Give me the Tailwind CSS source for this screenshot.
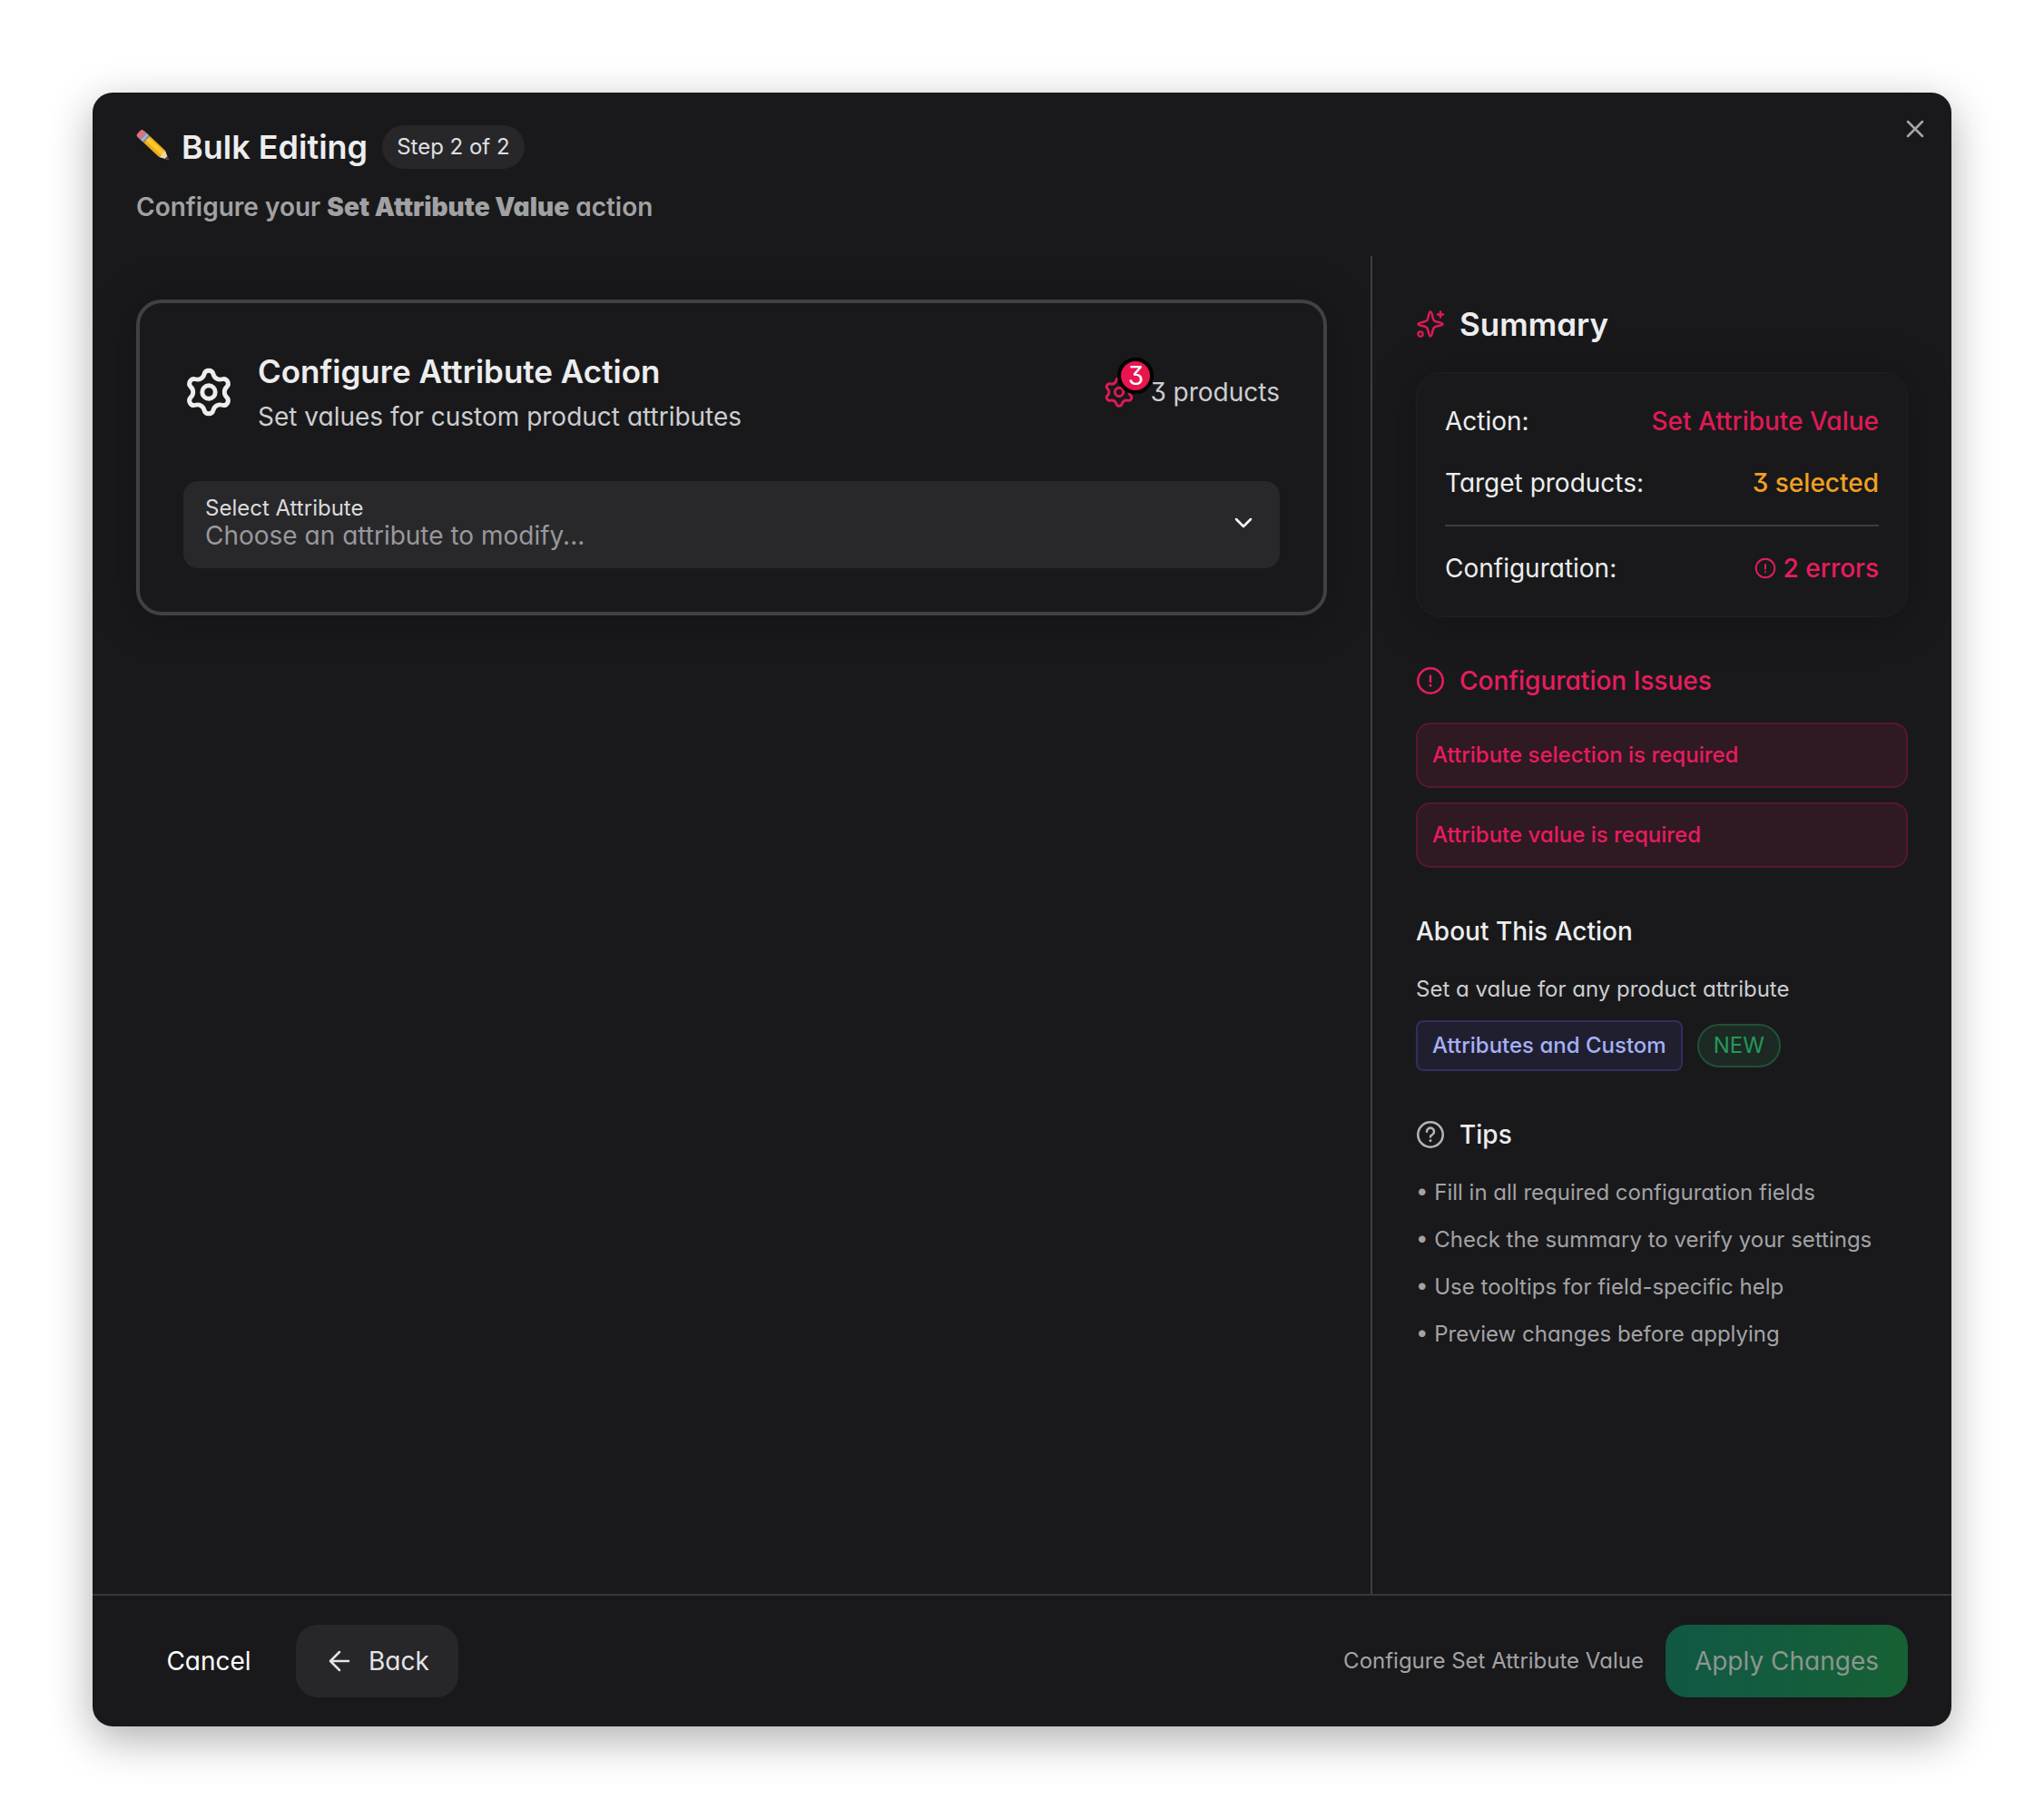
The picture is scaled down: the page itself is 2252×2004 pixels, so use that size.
<!DOCTYPE html>
<html lang="en">
<head>
  <meta charset="UTF-8">
  <meta name="viewport" content="width=device-width, initial-scale=1.0">
  <title>Bulk Editing</title>
  <script src="https://cdn.jsdelivr.net/npm/@tailwindcss/browser@4"></script>
</head>
<body class="bg-white font-['Inter','Liberation_Sans',sans-serif] [font-feature-settings:'cv09','cv11'] [font-optical-sizing:none] antialiased">

  <!-- Shared icons -->
  <svg class="hidden" aria-hidden="true">
    <symbol id="gear" viewBox="0 0 24 24" fill="none" stroke="currentColor" stroke-linecap="round" stroke-linejoin="round">
      <path d="M9.860 3.490A2.200 2.200 0 0 1 14.140 3.490A3.300 3.300 0 0 0 18.300 5.890A2.200 2.200 0 0 1 20.440 9.600A3.300 3.300 0 0 0 20.440 14.400A2.200 2.200 0 0 1 18.300 18.110A3.300 3.300 0 0 0 14.140 20.510A2.200 2.200 0 0 1 9.860 20.510A3.300 3.300 0 0 0 5.700 18.110A2.200 2.200 0 0 1 3.560 14.400A3.300 3.300 0 0 0 3.560 9.600A2.200 2.200 0 0 1 5.700 5.890A3.300 3.300 0 0 0 9.860 3.490z"/>
      <circle cx="12" cy="12" r="3.100"/>
    </symbol>
    <symbol id="alert" viewBox="0 0 24 24" fill="none" stroke="currentColor" stroke-linecap="round" stroke-linejoin="round">
      <circle cx="12" cy="12" r="10.300" stroke-width="1.900"/>
      <path d="M12 8v4.700" stroke-width="1.900"/>
      <path d="M12 16h.01" stroke-width="2.200"/>
    </symbol>
  </svg>

  <div class="flex min-h-screen p-[102px]">
    <div role="dialog" aria-labelledby="dialog-title" class="relative flex flex-1 flex-col overflow-clip rounded-[22px] bg-[#19191b] text-[28px] leading-[44px] text-[#ededee] shadow-[0_14px_48px_rgba(0,0,0,0.32)]">

      <button type="button" aria-label="Close" class="absolute top-5 right-5 flex size-10 items-center justify-center text-[#a6a6aa]">
        <svg class="size-6" viewBox="0 0 24 24" fill="none" stroke="currentColor" stroke-width="2.500" stroke-linecap="round"><path d="M4 4l16 16M20 4L4 20"/></svg>
      </button>

      <!-- Header -->
      <header class="flex flex-col gap-5 px-12 pt-9 pb-7">
        <div class="flex items-center">
          <svg class="mr-3.5 size-9 overflow-visible" viewBox="0 0 36 36" aria-hidden="true">
            <g transform="translate(3 1.500) rotate(43)">
              <path d="M3-5h4V5H3a3 3 0 0 1-3-3v-4a3 3 0 0 1 3-3z" fill="#e0707c"/>
              <path d="M6-5h6V5H6z" fill="#8593b0"/>
              <path d="M8-5h1.500V5H8z" fill="#b4bfd2"/>
              <path d="M12-5h23v10H12z" fill="#f0a91c"/>
              <path d="M12-3h24v4.500H12z" fill="#fccb2e"/>
              <path d="M35-5l10 5-10 5z" fill="#ecd7a5"/>
              <path d="M41-2l4.500 2L41 2z" fill="#44403f"/>
            </g>
          </svg>
          <h1 id="dialog-title" class="text-[36px] font-semibold">Bulk Editing</h1>
          <span class="ml-4 flex h-12 items-center rounded-full bg-[#27272a] px-4 text-[24px] text-[#e0e0e2]">Step 2 of 2</span>
        </div>
        <p class="h-12 font-semibold text-[#a1a1a3]">Configure your <strong class="font-black">Set Attribute Value</strong> action</p>
      </header>

      <div class="flex flex-1">
        <!-- Configuration -->
        <main class="flex-1 p-12">
          <section class="rounded-[28px] border-4 border-[#414145] p-12 shadow-[0_4px_48px_rgba(0,0,0,0.25)]">
            <div class="flex items-center justify-between">
              <div class="flex items-center gap-6.5">
                <svg class="size-14" stroke-width="2.100"><use href="#gear"/></svg>
                <div>
                  <h2 class="text-[35px] leading-[54px] font-semibold">Configure Attribute Action</h2>
                  <p class="leading-[46px] text-[#cdcdd0]">Set values for custom product attributes</p>
                </div>
              </div>
              <div class="flex items-center gap-4 text-[#cdcdd0]">
                <span class="relative">
                  <svg class="size-9 text-[#df1a55]" stroke-width="2"><use href="#gear"/></svg>
                  <span class="absolute -top-5 -right-5 flex size-10 items-center justify-center rounded-full border-4 border-black bg-[#e8154f] text-white">3</span>
                </span>
                <span>3 products</span>
              </div>
            </div>
            <div class="relative mt-12 flex h-24 flex-col rounded-2xl bg-[#28282b] pt-4">
              <label for="attribute" class="px-6 text-[24px] leading-7 text-[#dadadc]">Select Attribute</label>
              <select id="attribute" class="h-8 appearance-none bg-transparent px-6 leading-8 text-[#98989c]">
                <option>Choose an attribute to modify...</option>
              </select>
              <svg class="pointer-events-none absolute top-8 right-6 size-8" viewBox="0 0 32 32" fill="none" stroke="#fff" stroke-width="2.500" stroke-linecap="round" stroke-linejoin="round"><path d="M8 10l8 8 8-8"/></svg>
            </div>
          </section>
        </main>

        <!-- Sidebar -->
        <aside class="flex w-[640px] shrink-0 flex-col gap-12 border-l-2 border-[#3d3d40] p-12">
          <section>
            <h2 class="flex items-center gap-4 text-[35px] leading-[54px] font-semibold">
              <svg class="size-8 text-[#df1a55]" viewBox="0 0 32 32" fill="none" stroke="currentColor" stroke-width="2.500" stroke-linecap="round" stroke-linejoin="round">
                <path d="M16 2.500c1.600 0 1.900 3.500 2.600 6.500.8 3.200 1.400 3.800 4.400 4.500 3 .7 6.500 1 6.500 2.500s-3.500 1.800-6.500 2.500c-3 .7-3.600 1.300-4.400 4.500-.7 3-1 6.500-2.600 6.500s-1.900-3.500-2.600-6.500c-.8-3.200-1.400-3.800-4.400-4.500-3-.7-6.500-1-6.500-2.500s3.500-1.800 6.500-2.500c3-.7 3.600-1.300 4.400-4.500.7-3 1-6.500 2.600-6.500z"/>
                <path d="M27 2.500v6M24 5.500h6"/>
                <circle cx="5" cy="27" r="2.700" stroke-width="2.200"/>
              </svg>
              Summary
            </h2>
            <dl class="mt-6.5 flex flex-col gap-6 rounded-[28px] border border-[#202023] px-[31px] py-[31px] shadow-[0_4px_48px_rgba(0,0,0,0.25)]">
              <div class="flex justify-between"><dt>Action:</dt><dd class="font-medium text-[#df1a55]">Set Attribute Value</dd></div>
              <div class="flex justify-between"><dt>Target products:</dt><dd class="font-medium text-[#f0a120]">3 selected</dd></div>
              <div class="flex justify-between border-t-2 border-[#3d3d40] pt-6"><dt>Configuration:</dt><dd class="flex items-center gap-2 font-medium text-[#e81c5e]"><svg class="size-6"><use href="#alert"/></svg>2 errors</dd></div>
            </dl>
          </section>

          <section class="text-[#e81c5e]">
            <h3 class="flex items-center gap-4 font-medium"><svg class="size-8"><use href="#alert"/></svg>Configuration Issues</h3>
            <ul class="mt-6 flex flex-col gap-4 text-[24px] font-medium">
              <li class="flex h-[72px] items-center rounded-2xl border-2 border-[#591730] bg-[#2f1922] px-4">Attribute selection is required</li>
              <li class="flex h-[72px] items-center rounded-2xl border-2 border-[#591730] bg-[#2f1922] px-4">Attribute value is required</li>
            </ul>
          </section>

          <section>
            <h3 class="font-medium">About This Action</h3>
            <p class="mt-6 text-[24px] leading-9 text-[#cdcdd0]">Set a value for any product attribute</p>
            <div class="mt-4 flex items-center gap-4 text-[24px]">
              <span class="flex h-14 items-center rounded-lg border-2 border-[#302f5c] bg-[#201f30] px-4 font-medium text-[#a5b0f5]">Attributes and Custom</span>
              <span class="flex h-12 items-center rounded-full border-2 border-[#21503a] bg-[#1c2a23] px-4 text-[#25975a]">NEW</span>
            </div>
          </section>

          <section>
            <h3 class="flex items-center gap-4 font-medium">
              <svg class="size-8 text-[#b4b4b7]" viewBox="0 0 24 24" fill="none" stroke="currentColor" stroke-width="1.900" stroke-linecap="round" stroke-linejoin="round"><circle cx="12" cy="12" r="10.300"/><path d="M9 9.500a3 3 0 1 1 4.500 2.600c-1 .5-1.500 1-1.500 1.700"/><path d="M12 17h.01" stroke-width="2.200"/></svg>
              Tips
            </h3>
            <ul class="mt-6 flex flex-col gap-4 text-[24px] leading-9 text-[#a3a3a6]">
              <li>• Fill in all required configuration fields</li>
              <li>• Check the summary to verify your settings</li>
              <li>• Use tooltips for field-specific help</li>
              <li>• Preview changes before applying</li>
            </ul>
          </section>
        </aside>
      </div>

      <!-- Footer -->
      <footer class="flex items-center justify-between border-t-2 border-[#38383b] px-12 py-8">
        <div class="flex gap-4">
          <button type="button" class="h-20 min-w-40 rounded-[24px] px-8 text-white">Cancel</button>
          <button type="button" class="flex h-20 items-center gap-4 rounded-[24px] bg-[#27272b] px-8 text-[#e4e4e7]">
            <svg class="size-8" viewBox="0 0 32 32" fill="none" stroke="currentColor" stroke-width="2.500" stroke-linecap="round" stroke-linejoin="round"><path d="M26 16H6M16 6L6 16l10 10"/></svg>
            Back
          </button>
        </div>
        <div class="flex items-center gap-6">
          <span class="text-[24px] text-[#a3a3a6]">Configure Set Attribute Value</span>
          <button type="button" disabled class="h-20 rounded-[24px] bg-linear-to-r from-[#115845] to-[#176134] px-8 text-[#8b968f]">Apply Changes</button>
        </div>
      </footer>
    </div>
  </div>
</body>
</html>
